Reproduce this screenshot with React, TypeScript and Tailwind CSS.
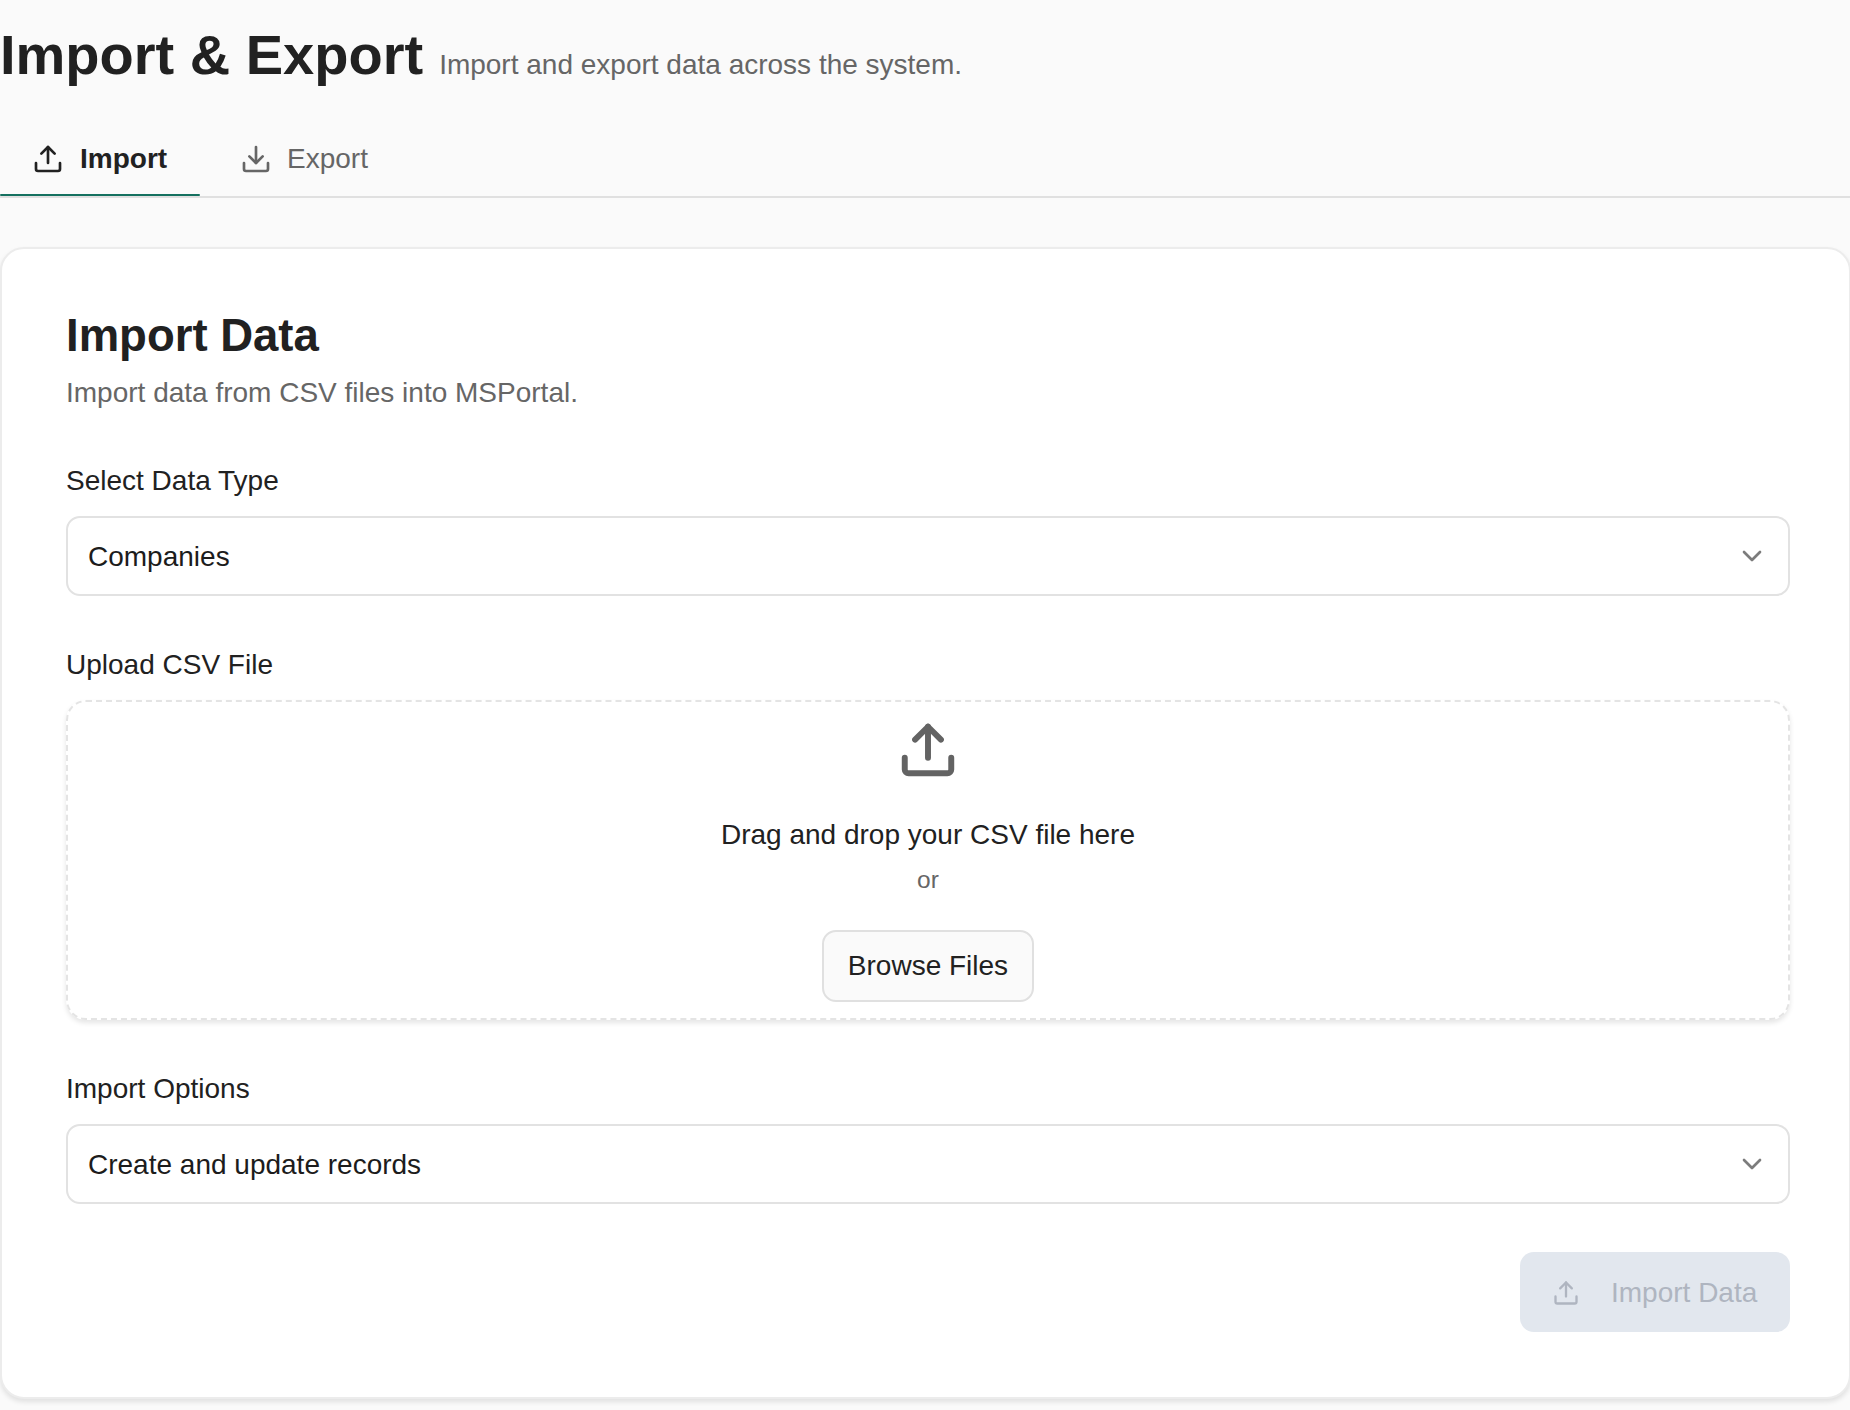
import React from "react";

function UploadIcon({ size, sw, className }: { size: number; sw: number; className?: string }) {
  return (
    <svg width={size} height={size} viewBox="0 0 24 24" fill="none" stroke="currentColor" strokeWidth={sw} strokeLinecap="round" strokeLinejoin="round" className={className}>
      <path d="M21 15v4.5a1.5 1.5 0 0 1-1.5 1.5h-15A1.5 1.5 0 0 1 3 19.5V15" />
      <polyline points="17 8 12 3 7 8" />
      <line x1="12" y1="3" x2="12" y2="15" />
    </svg>
  );
}

function DownloadIcon({ size, sw, className }: { size: number; sw: number; className?: string }) {
  return (
    <svg width={size} height={size} viewBox="0 0 24 24" fill="none" stroke="currentColor" strokeWidth={sw} strokeLinecap="round" strokeLinejoin="round" className={className}>
      <path d="M21 15v4.5a1.5 1.5 0 0 1-1.5 1.5h-15A1.5 1.5 0 0 1 3 19.5V15" />
      <polyline points="7 10 12 15 17 10" />
      <line x1="12" y1="15" x2="12" y2="3" />
    </svg>
  );
}

function Chevron() {
  return (
    <svg width="32" height="32" viewBox="0 0 24 24" fill="none" stroke="currentColor" strokeWidth="2" strokeLinecap="round" strokeLinejoin="round" className="text-[#7c7c7c]">
      <path d="m6 9 6 6 6-6" />
    </svg>
  );
}

function SelectBox({ value }: { value: string }) {
  return (
    <div className="flex h-[80px] items-center justify-between rounded-[14px] border-2 border-[#e2e2e2] bg-white pl-[20px] pr-[20px] text-[28px] text-[#1c1c1c]">
      <span className="pt-[1px]">{value}</span>
      <Chevron />
    </div>
  );
}

export default function App() {
  return (
    <div className="h-[1410px] overflow-hidden bg-[#fafafa] font-['Liberation_Sans',Arial,sans-serif]">
      <header className="flex items-baseline gap-[16px] pt-[20px]">
        <h1 className="text-[56px] font-bold leading-[70px] text-[#212121]">Import &amp; Export</h1>
        <p className="text-[28px] leading-[40px] text-[#666666]">Import and export data across the system.</p>
      </header>

      <nav className="mt-[18px] flex h-[90px] border-b-2 border-[#e0e0e0]">
        <div className="relative flex w-[200px] items-center gap-[16px] pl-[32px] pt-[14px] text-[28px] font-bold text-[#212121]">
          <UploadIcon size={32} sw={2} />
          <span>Import</span>
          <div className="absolute bottom-0 left-0 h-[2px] w-full rounded-full bg-[#14705f]" />
        </div>
        <div className="flex items-center gap-[15px] pl-[40px] pt-[14px] text-[28px] text-[#666666]">
          <DownloadIcon size={32} sw={2} />
          <span>Export</span>
        </div>
      </nav>

      <main className="mt-[49px] flex h-[1152px] w-[1851px] flex-col rounded-[24px] border-2 border-[#ececec] bg-white pl-[64px] pr-[59px] pt-[59px] shadow-[0_3px_5px_rgba(0,0,0,0.1)]">
        <h2 className="text-[45.5px] font-bold leading-[56px] text-[#212121]">Import Data</h2>
        <p className="mt-[9px] text-[28px] leading-[40px] text-[#666666]">Import data from CSV files into MSPortal.</p>

        <label className="mt-[48px] text-[28px] leading-[40px] text-[#212121]">Select Data Type</label>
        <div className="mt-[15px]">
          <SelectBox value="Companies" />
        </div>

        <label className="mt-[49px] text-[28px] leading-[40px] text-[#212121]">Upload CSV File</label>
        <div className="mt-[15px] flex h-[320px] flex-col items-center rounded-[20px] border-2 border-dashed border-[#e4e4e4] pt-[17px] shadow-[0_3px_5px_rgba(0,0,0,0.1)]">
          <UploadIcon size={62} sw={2.3} className="text-[#636363]" />
          <p className="mt-[34px] text-[28px] leading-[40px] text-[#212121]">Drag and drop your CSV file here</p>
          <p className="mt-[7px] text-[24.5px] leading-[36px] text-[#666666]">or</p>
          <button className="mt-[32px] h-[72px] w-[212px] rounded-[14px] border-2 border-[#e0e0e0] bg-[#fafafa] text-[28px] text-[#212121]">Browse Files</button>
        </div>

        <label className="mt-[49px] text-[28px] leading-[40px] text-[#212121]">Import Options</label>
        <div className="mt-[15px]">
          <SelectBox value="Create and update records" />
        </div>

        <div className="mt-[48px] flex justify-end">
          <button className="flex h-[80px] w-[270px] items-center rounded-[14px] bg-[#e2e7ee] pl-[32px] pt-[1px] text-[28px] text-[#afb5c0]">
            <UploadIcon size={28} sw={2} />
            <span className="ml-[31px]">Import Data</span>
          </button>
        </div>
      </main>
    </div>
  );
}
